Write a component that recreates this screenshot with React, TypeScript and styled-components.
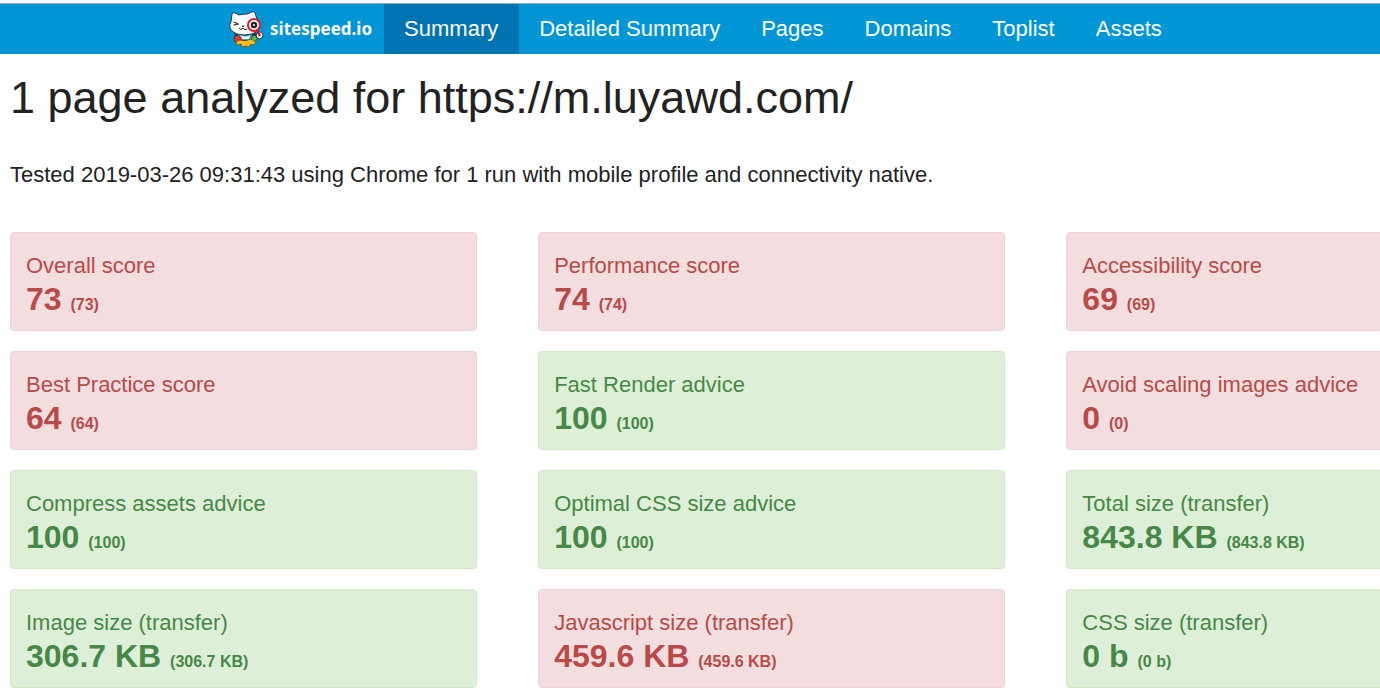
import React from "react";
import styled, { createGlobalStyle } from "styled-components";

const GlobalStyle = createGlobalStyle`
  *, *::before, *::after { box-sizing: border-box; }
  body {
    margin: 0;
    background: #fff;
    color: #222;
    font-family: "Liberation Sans", Arial, sans-serif;
    font-size: 22px;
    line-height: 34px;
    overflow-x: hidden;
  }
`;

const Page = styled.div`
  padding-top: 3px;
  overflow-x: clip;
`;

const TopBar = styled.header`
  border-top: 1px solid #8fa9b5;
  background: #0095d5;
`;

const Nav = styled.nav`
  display: flex;
  align-items: stretch;
  height: 50px;
  padding-left: 16.6%;
`;

const Brand = styled.a`
  display: flex;
  align-items: center;
  gap: 4px;
  width: 155px;
  flex: none;
  color: #fff;
  text-decoration: none;
  font-family: "Noto Sans", "Open Sans", sans-serif;
  font-size: 17px;
  font-weight: 700;
`;

const Cat = styled.svg`
  width: 37px;
  height: 38px;
  flex: none;
`;

const NavLink = styled.a<{ $active?: boolean }>`
  padding: 8px 21px 8px 20px;
  color: #fff;
  background: ${(p) => (p.$active ? "#0074b3" : "transparent")};
  text-decoration: none;
  white-space: nowrap;
`;

const Main = styled.main`
  width: 112%;
  padding: 0 12px 11px 10px;
`;

const Title = styled.h1`
  margin: 0;
  padding: 16px 0 32px;
  font-size: 45px;
  font-weight: 400;
  line-height: 56px;
`;

const Intro = styled.p`
  margin: 0 0 40px;
`;

const Cards = styled.div`
  display: grid;
  grid-template-columns: repeat(3, 1fr);
  gap: 20px 4%;
`;

const Card = styled.section<{ $ok: boolean }>`
  padding: 16px 15px 14px;
  border: 1px solid ${(p) => (p.$ok ? "#d0e9c0" : "#eed0d5")};
  border-radius: 4px;
  background: ${(p) => (p.$ok ? "#deefd8" : "#f2dede")};
  color: ${(p) => (p.$ok ? "#468847" : "#b94a48")};
`;

const Label = styled.div`
  line-height: 34px;
`;

const Value = styled.div`
  font-size: 32px;
  font-weight: 700;
  line-height: 33px;
`;

const Detail = styled.span`
  font-size: 16px;
  line-height: 16px;
`;

const links = ["Summary", "Detailed Summary", "Pages", "Domains", "Toplist", "Assets"];

const scores: { label: string; value: string; ok: boolean }[] = [
  { label: "Overall score", value: "73", ok: false },
  { label: "Performance score", value: "74", ok: false },
  { label: "Accessibility score", value: "69", ok: false },
  { label: "Best Practice score", value: "64", ok: false },
  { label: "Fast Render advice", value: "100", ok: true },
  { label: "Avoid scaling images advice", value: "0", ok: false },
  { label: "Compress assets advice", value: "100", ok: true },
  { label: "Optimal CSS size advice", value: "100", ok: true },
  { label: "Total size (transfer)", value: "843.8 KB", ok: true },
  { label: "Image size (transfer)", value: "306.7 KB", ok: true },
  { label: "Javascript size (transfer)", value: "459.6 KB", ok: false },
  { label: "CSS size (transfer)", value: "0 b", ok: true },
];

function CatLogo() {
  return (
    <Cat viewBox="0 0 37 38" aria-hidden="true">
      <path d="M6 23 Q4 28 7 31 L25 31 Q28 27 27 22 Z" fill="#123f58" />
      <path d="M9 24 Q16 27 23 24 L23 30 H9 Z" fill="#2aa7e2" />
      <path d="M11 25 Q16 28 21 25 L20 29 H12 Z" fill="#fff" />
      <path d="M5 28 L8 25 L12 27 L13 31 L9 33 L5 31 Z" fill="#e5382c" stroke="#3b2a22" strokeWidth="0.6" />
      <path d="M22 28 L25 25 L28 27 L28 30 L24 32 Z" fill="#63b53c" stroke="#26352a" strokeWidth="0.6" />
      <path d="M11 30 Q17 32 22 29 L25 31 L27 32 L25 35 L22 34 L20 37 L17 36 L13 37 L12 34 L8 35 L7 32 Z" fill="#fcc21b" stroke="#5b4520" strokeWidth="0.7" />
      <path d="M27 25 L30 22 Q33 21 34 25 L33 28 Q31 30 28 28 Z" fill="#fff" stroke="#1b2b35" strokeWidth="0.9" />
      <path d="M2 12 L3 4 Q4 2 6 3 L10 5 Q14 4 18 4 L23 2 Q25 1 26 3 L28 9 Q33 17 27 22 Q23 25 15 25 Q7 25 3 21 Q-1 17 2 12 Z" fill="#fff" stroke="#1b2b35" strokeWidth="0.9" />
      <path d="M5 12 L9 14 L5 15" fill="none" stroke="#222" strokeWidth="1.1" strokeLinecap="round" />
      <path d="M13 16 L15 16 L14 17 Z" fill="#222" stroke="#222" strokeWidth="0.8" />
      <path d="M10 18 Q12 21 14 18 Q16 21 18 19" fill="none" stroke="#222" strokeWidth="1" />
      <path d="M28 20 L31 26" stroke="#c81e29" strokeWidth="2.4" />
      <circle cx="25" cy="15" r="6" fill="#fff" stroke="#dc1f2c" strokeWidth="2.2" />
      <circle cx="25" cy="15" r="3.2" fill="#222" />
      <circle cx="25" cy="15" r="1" fill="#fff" />
    </Cat>
  );
}

export default function App() {
  return (
    <Page>
      <GlobalStyle />
      <TopBar>
        <Nav>
          <Brand href="#home">
            <CatLogo />
            <span>sitespeed.io</span>
          </Brand>
          {links.map((name, i) => (
            <NavLink key={name} href={`#${name}`} $active={i === 0}>
              {name}
            </NavLink>
          ))}
        </Nav>
      </TopBar>
      <Main>
        <Title>1 page analyzed for https://m.luyawd.com/</Title>
        <Intro>
          Tested 2019-03-26 09:31:43 using Chrome for 1 run with mobile profile and connectivity native.
        </Intro>
        <Cards>
          {scores.map((s) => (
            <Card key={s.label} $ok={s.ok}>
              <Label>{s.label}</Label>
              <Value>
                {s.value} <Detail>({s.value})</Detail>
              </Value>
            </Card>
          ))}
        </Cards>
      </Main>
    </Page>
  );
}
